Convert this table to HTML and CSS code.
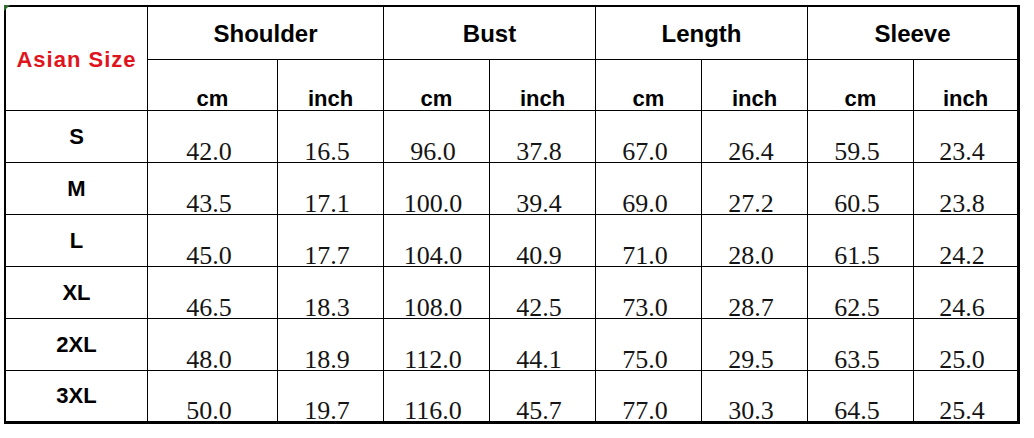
FILE: index.html
```html
<!DOCTYPE html>
<html>
<head>
<meta charset="utf-8">
<link rel="stylesheet" href="styles.css">
</head>
<body>
<div class="sheet">
  <span class="corner"></span>
  <div class="grid">
    <div class="cell title">Asian Size</div>
    <div class="cell group span2">Shoulder</div>
    <div class="cell group span2">Bust</div>
    <div class="cell group span2">Length</div>
    <div class="cell group span2">Sleeve</div>
    <div class="cell unit">cm</div><div class="cell unit">inch</div>
    <div class="cell unit">cm</div><div class="cell unit">inch</div>
    <div class="cell unit">cm</div><div class="cell unit">inch</div>
    <div class="cell unit">cm</div><div class="cell unit">inch</div>

    <div class="cell size">S</div>
    <div class="cell val">42.0</div><div class="cell val">16.5</div><div class="cell val">96.0</div><div class="cell val">37.8</div><div class="cell val">67.0</div><div class="cell val">26.4</div><div class="cell val">59.5</div><div class="cell val">23.4</div>

    <div class="cell size">M</div>
    <div class="cell val">43.5</div><div class="cell val">17.1</div><div class="cell val">100.0</div><div class="cell val">39.4</div><div class="cell val">69.0</div><div class="cell val">27.2</div><div class="cell val">60.5</div><div class="cell val">23.8</div>

    <div class="cell size">L</div>
    <div class="cell val">45.0</div><div class="cell val">17.7</div><div class="cell val">104.0</div><div class="cell val">40.9</div><div class="cell val">71.0</div><div class="cell val">28.0</div><div class="cell val">61.5</div><div class="cell val">24.2</div>

    <div class="cell size">XL</div>
    <div class="cell val">46.5</div><div class="cell val">18.3</div><div class="cell val">108.0</div><div class="cell val">42.5</div><div class="cell val">73.0</div><div class="cell val">28.7</div><div class="cell val">62.5</div><div class="cell val">24.6</div>

    <div class="cell size">2XL</div>
    <div class="cell val">48.0</div><div class="cell val">18.9</div><div class="cell val">112.0</div><div class="cell val">44.1</div><div class="cell val">75.0</div><div class="cell val">29.5</div><div class="cell val">63.5</div><div class="cell val">25.0</div>

    <div class="cell size">3XL</div>
    <div class="cell val">50.0</div><div class="cell val">19.7</div><div class="cell val">116.0</div><div class="cell val">45.7</div><div class="cell val">77.0</div><div class="cell val">30.3</div><div class="cell val">64.5</div><div class="cell val">25.4</div>
  </div>
</div>
</body>
</html>
```

FILE: styles.css
```css
html, body {
  margin: 0;
  padding: 0;
  background: #ffffff;
}

.sheet {
  position: relative;
  margin: 5px 0 0 4px;
  width: 1016px;
}

.corner {
  position: absolute;
  left: 0;
  top: 0;
  width: 0;
  height: 0;
  border-top: 6px solid #2f6b2a;
  border-right: 6px solid transparent;
  z-index: 2;
}

.grid {
  display: grid;
  grid-template-columns: 141px 129px 105px 105px 105px 105px 105px 105px 103px;
  grid-template-rows: 52px 50px 51px 51px 51px 51px 51px 50px;
  gap: 1px;
  background: #000000;
  border-style: solid;
  border-color: #000000;
  border-width: 2px 3px 3px 2px;
  width: 1011px;
}

.cell {
  background: #ffffff;
  display: flex;
  justify-content: center;
  color: #000000;
}

.title {
  grid-row: span 2;
  align-items: center;
  font-family: "Liberation Sans", Arial, sans-serif;
  font-weight: bold;
  font-size: 22px;
  letter-spacing: 1px;
  color: #e0141c;
  line-height: 1;
  padding-top: 2px;
}

.span2 {
  grid-column: span 2;
}

.group {
  align-items: center;
  font-family: "Liberation Sans", Arial, sans-serif;
  font-weight: bold;
  font-size: 24px;
  line-height: 1;
  padding-top: 2px;
}

.unit {
  align-items: flex-end;
  font-family: "Liberation Sans", Arial, sans-serif;
  font-weight: bold;
  font-size: 22px;
  line-height: 22px;
}

.size {
  align-items: center;
  font-family: "Liberation Sans", Arial, sans-serif;
  font-weight: bold;
  font-size: 22px;
  line-height: 1;
}

.val {
  align-items: flex-end;
  font-family: "Liberation Serif", "Times New Roman", serif;
  font-size: 26px;
  line-height: 20px;
  padding-right: 7px;
  color: #151515;
}
```
